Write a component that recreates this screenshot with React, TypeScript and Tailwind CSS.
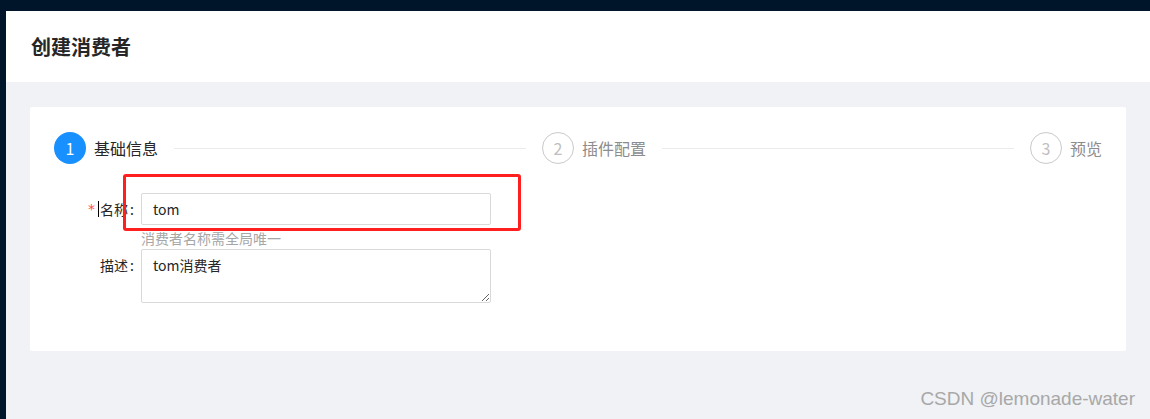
const font = "font-['Noto_Sans_CJK_SC','Noto_Sans',sans-serif]";

function StepIcon({ n, active }: { n: number; active?: boolean }) {
  return active ? (
    <div className="w-8 h-8 rounded-full bg-[#1890ff] text-white flex items-center justify-center text-[16px] shrink-0">
      {n}
    </div>
  ) : (
    <div className="w-8 h-8 rounded-full border border-[#c9c9c9] text-[#bfbfbf] flex items-center justify-center text-[16px] shrink-0">
      {n}
    </div>
  );
}

function Steps() {
  return (
    <div className="flex items-center">
      <div className="w-[472px] flex items-center overflow-hidden">
        <StepIcon n={1} active />
        <span className="ml-2 pr-4 text-[16px] leading-8 text-[#262626] whitespace-nowrap">基础信息</span>
        <div className="flex-1 h-px bg-[#ebebeb]" />
      </div>
      <div className="w-[488px] pl-4 flex items-center overflow-hidden">
        <StepIcon n={2} />
        <span className="ml-2 pr-4 text-[16px] leading-8 text-[#8c8c8c] whitespace-nowrap">插件配置</span>
        <div className="flex-1 h-px bg-[#ebebeb]" />
      </div>
      <div className="pl-4 flex items-center">
        <StepIcon n={3} />
        <span className="ml-2 text-[16px] leading-8 text-[#8c8c8c] whitespace-nowrap">预览</span>
      </div>
    </div>
  );
}

export default function App() {
  return (
    <div className={`w-[1150px] h-[419px] bg-[#001529] flex flex-col overflow-hidden ${font}`}>
      <div className="h-[11px] shrink-0" />
      <div className="flex-1 flex">
        <div className="w-[6px] shrink-0" />
        <div className="flex-1 bg-[#f0f2f5] flex flex-col relative">
          <div className="h-[71px] bg-white flex items-center px-[25px]">
            <h1 className="text-[20px] font-semibold text-[#262626] leading-none">创建消费者</h1>
          </div>
          <div className="pt-[25px] px-[24px]">
            <div className="relative bg-white rounded-[2px] h-[244px] px-[24px] pt-[25px]">
              <Steps />
              <div className="mt-[29px] text-[14px] text-[#262626]">
                <div className="flex items-center">
                  <div className="w-[87px] flex justify-end items-center">
                    <span className="text-[#ff4d4f] mr-[3px] font-['DejaVu_Sans',sans-serif] text-[14px]">*</span>
                    <span className="inline-block w-px h-[16px] bg-black mr-px" />
                    <span>名称</span>
                    <span className="ml-[2px] mr-[7px]">:</span>
                  </div>
                  <input
                    defaultValue="tom"
                    className="w-[350px] h-[32px] border border-[#d9d9d9] rounded-[2px] px-[11px] text-[14px] text-[#262626] outline-none"
                  />
                </div>
                <div className="ml-[87px] h-[24px] pt-[2px] text-[14px] leading-[22px] text-[#a6a6a6]">消费者名称需全局唯一</div>
                <div className="flex items-start">
                  <div className="w-[87px] flex justify-end items-center h-[32px]">
                    <span>描述</span>
                    <span className="ml-[2px] mr-[7px]">:</span>
                  </div>
                  <textarea
                    defaultValue="tom消费者"
                    className="w-[350px] h-[54px] border border-[#d9d9d9] rounded-[2px] px-[11px] py-[4px] text-[14px] leading-[22px] text-[#262626] outline-none"
                  />
                </div>
              </div>
              <div className="absolute left-[93px] top-[67px] w-[398px] h-[57px] border-[3px] border-[#ff1f1f] rounded-[3px] pointer-events-none" />
            </div>
          </div>
          <div className="absolute right-[15px] bottom-[6px] text-[19px] text-[#a8a8a8] font-['Liberation_Sans',sans-serif]">
            CSDN @lemonade-water
          </div>
        </div>
      </div>
    </div>
  );
}
